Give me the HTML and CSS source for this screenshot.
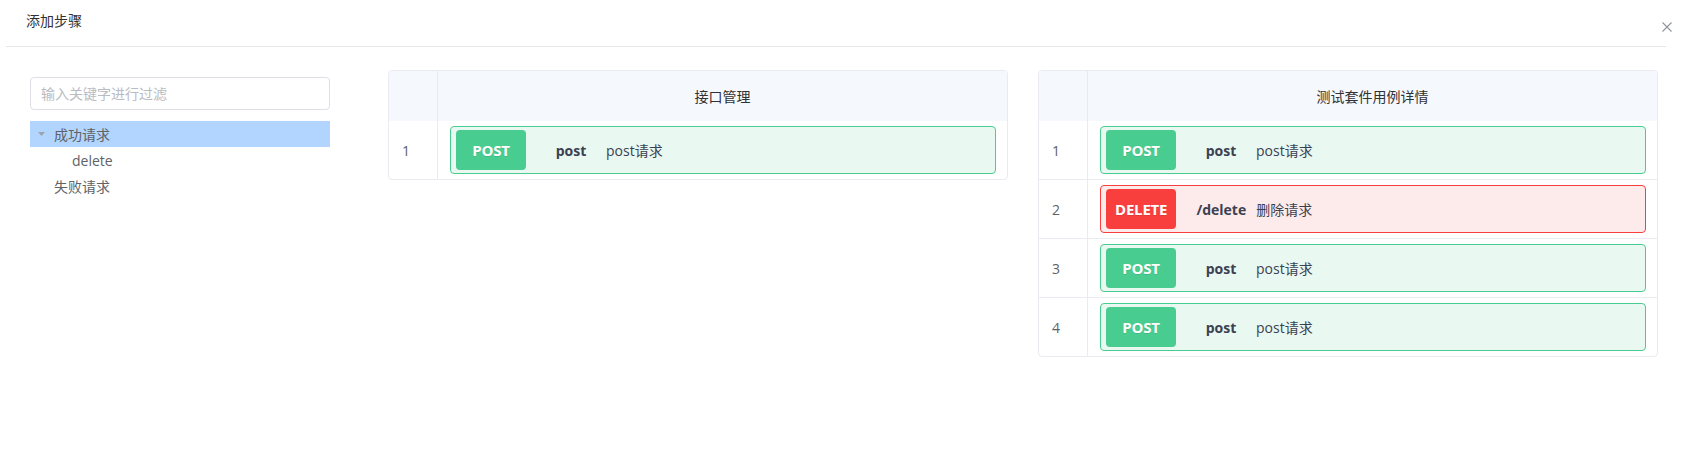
FILE: index.html
```html
<!DOCTYPE html>
<html lang="zh">
<head>
<meta charset="utf-8">
<title>添加步骤</title>
<link rel="stylesheet" href="styles.css">
</head>
<body>
<div class="dialog">
  <div class="dialog-header">
    <span class="title">添加步骤</span>
    <svg class="close" width="10" height="10" viewBox="0 0 10 10"><path d="M0.5 0.5L9.5 9.5M9.5 0.5L0.5 9.5" stroke="#909399" stroke-width="1.1" fill="none"/></svg>
  </div>
  <div class="divider"></div>
  <div class="dialog-body">
    <aside class="side">
      <input class="filter" type="text" placeholder="输入关键字进行过滤">
      <ul class="tree">
        <li class="node current"><span class="caret"><svg width="7" height="4" viewBox="0 0 7 4"><path d="M0 0H7L3.5 4Z" fill="#9ea3ab"/></svg></span><span class="label">成功请求</span></li>
        <li class="node level2"><span class="caret"></span><span class="label">delete</span></li>
        <li class="node"><span class="caret"></span><span class="label">失败请求</span></li>
      </ul>
    </aside>

    <section class="grid">
      <div class="thead">
        <div class="cell-idx"></div>
        <div class="cell-main head-text">接口管理</div>
      </div>
      <div class="trow">
        <div class="cell-idx">1</div>
        <div class="cell-main">
          <div class="op post"><span class="method">POST</span><span class="path">post</span><span class="desc">post请求</span></div>
        </div>
      </div>
    </section>

    <section class="grid">
      <div class="thead">
        <div class="cell-idx"></div>
        <div class="cell-main head-text">测试套件用例详情</div>
      </div>
      <div class="trow">
        <div class="cell-idx">1</div>
        <div class="cell-main">
          <div class="op post"><span class="method">POST</span><span class="path">post</span><span class="desc">post请求</span></div>
        </div>
      </div>
      <div class="trow">
        <div class="cell-idx">2</div>
        <div class="cell-main">
          <div class="op delete"><span class="method">DELETE</span><span class="path">/delete</span><span class="desc">删除请求</span></div>
        </div>
      </div>
      <div class="trow">
        <div class="cell-idx">3</div>
        <div class="cell-main">
          <div class="op post"><span class="method">POST</span><span class="path">post</span><span class="desc">post请求</span></div>
        </div>
      </div>
      <div class="trow">
        <div class="cell-idx">4</div>
        <div class="cell-main">
          <div class="op post"><span class="method">POST</span><span class="path">post</span><span class="desc">post请求</span></div>
        </div>
      </div>
    </section>
  </div>
</div>
</body>
</html>
```
FILE: styles.css
```css
* { box-sizing: border-box; }
html, body { margin: 0; padding: 0; background: #fff; }
body {
  font-family: "Open Sans", "Noto Sans CJK SC", sans-serif;
  font-size: 14px;
  color: #303133;
}
.dialog { width: 1688px; height: 458px; }
.dialog-header {
  display: flex;
  justify-content: space-between;
  align-items: flex-start;
  height: 46px;
  padding: 0 16px 0 26px;
}
.title {
  margin-top: 11px;
  line-height: 20px;
  font-size: 14px;
  color: #303133;
}
.close { margin-top: 22px; display: block; }
.divider { height: 1px; background: #e4e6ea; margin: 0 22px 0 6px; }

.dialog-body {
  display: flex;
  align-items: flex-start;
  padding: 23px 30px 0 30px;
  gap: 30px;
}
.side { width: 300px; padding-top: 7px; margin-right: 28px; flex: none; }
.filter {
  display: block;
  width: 100%;
  height: 33px;
  border: 1px solid #dcdfe6;
  border-radius: 4px;
  padding: 0 10px;
  font-family: inherit;
  font-size: 14px;
  color: #606266;
  outline: none;
}
.filter::placeholder { color: #b9bcc3; }
.tree { list-style: none; margin: 11px 0 0; padding: 0; }
.node {
  display: flex;
  align-items: center;
  height: 26px;
  color: #606266;
  font-size: 14px;
}
.node.current { background: #b1d5fe; }
.node.level2 { padding-left: 18px; }
.caret {
  width: 24px;
  display: flex;
  justify-content: center;
  align-items: center;
  flex: none;
}
.caret svg { display: block; margin-left: -1px; }

.grid {
  width: 620px;
  flex: none;
  border: 1px solid #e9ebf0;
  border-radius: 4px;
  overflow: hidden;
}
.thead { display: flex; height: 50px; background: #f5f8fd; }
.trow { display: flex; }
.trow + .trow { border-top: 1px solid #e9ebf0; }
.cell-idx {
  width: 49px;
  flex: none;
  border-right: 1px solid #e9ebf0;
  display: flex;
  align-items: center;
  padding-left: 13px;
  color: #606266;
  font-size: 14px;
}
.cell-main { flex: 1; padding: 5px 11px 5px 12px; }
.head-text {
  display: flex;
  align-items: center;
  justify-content: center;
  padding: 0;
  color: #303133;
}
.op {
  display: flex;
  align-items: center;
  height: 48px;
  padding: 3px 5px;
  border: 1px solid #49cc90;
  border-radius: 4px;
  background: #e9f8f1;
}
.op.delete { border-color: #f93e3e; background: #fdebeb; }
.method {
  min-width: 70px;
  height: 40px;
  padding: 0 9px;
  border-radius: 4px;
  background: #49cc90;
  color: #fff;
  font-weight: 700;
  font-size: 15px;
  letter-spacing: -0.2px;
  display: flex;
  align-items: center;
  justify-content: center;
  text-shadow: 0 1px 0 rgba(0,0,0,.1);
}
.op.delete .method { background: #f93e3e; }
.path {
  width: 70px;
  margin-left: 10px;
  text-align: center;
  font-weight: 700;
  font-size: 14px;
  color: #3b4151;
  white-space: nowrap;
}
.desc { font-size: 14px; color: #3b4151; }
```
